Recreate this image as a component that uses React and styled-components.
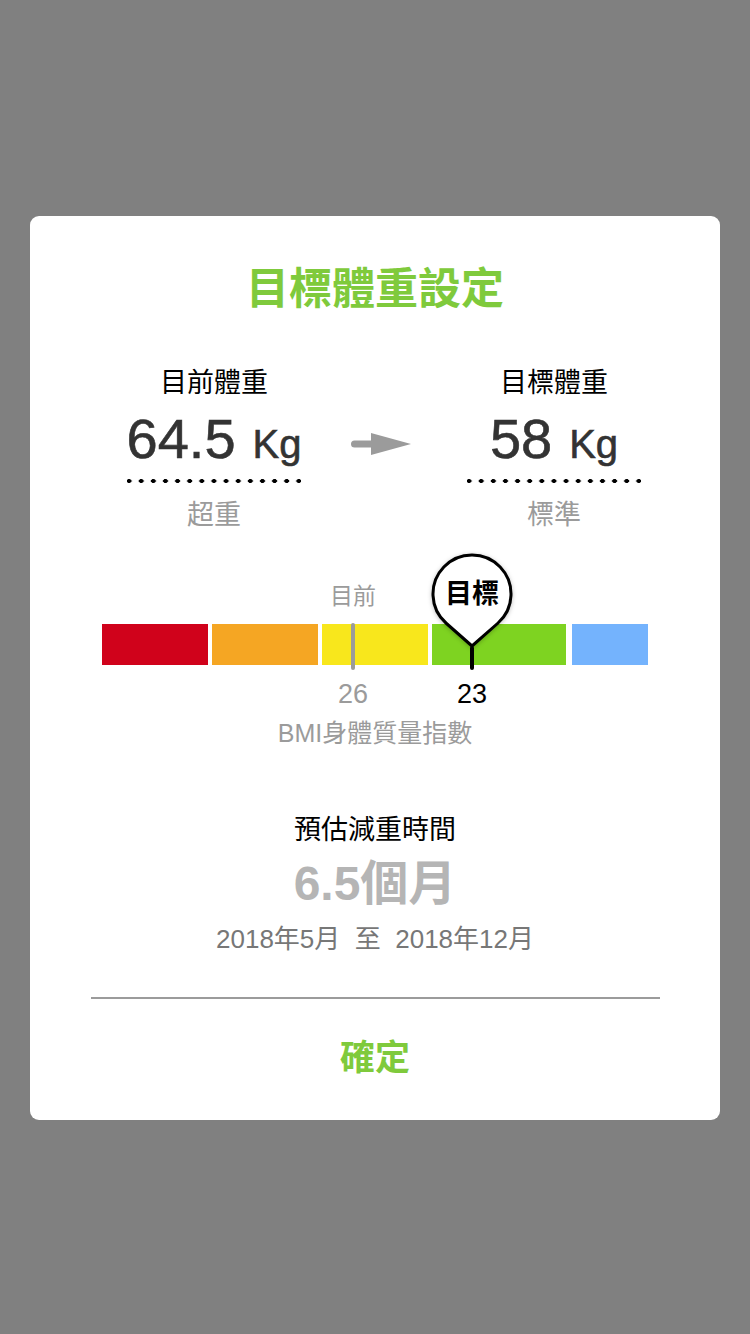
import React from 'react';
import styled, { createGlobalStyle } from 'styled-components';

const GlobalStyle = createGlobalStyle`
  html, body {
    margin: 0;
    padding: 0;
    background: #808080;
  }
  body {
    width: 750px;
    min-height: 1334px;
    font-family: "Liberation Sans", "Noto Sans CJK TC", sans-serif;
  }
`;

const GREEN = '#7fca3c';

const Page = styled.div`
  width: 750px;
  height: 1334px;
  padding-top: 216px;
  box-sizing: border-box;
`;

const Card = styled.div`
  width: 690px;
  margin-left: 30px;
  background: #fff;
  border-radius: 9px;
  padding: 43px 0 32px;
  box-sizing: border-box;
  display: flex;
  flex-direction: column;
  align-items: center;
`;

const Title = styled.h1`
  margin: 0;
  font-size: 43px;
  line-height: 60px;
  font-weight: 700;
  color: ${GREEN};
`;

const WeightRow = styled.div`
  align-self: stretch;
  display: flex;
  padding-left: 97px;
  margin-top: 47px;
`;

const WeightCol = styled.div`
  width: 174px;
  display: flex;
  flex-direction: column;
  align-items: center;
`;

const Label = styled.div`
  font-size: 27px;
  line-height: 34px;
  color: #000;
`;

const Number = styled.div`
  margin-top: 9px;
  height: 60px;
  display: flex;
  align-items: baseline;
  white-space: nowrap;
  color: #333;
  font-size: 56px;
  line-height: 60px;
  -webkit-text-stroke: 0.6px #333;
`;

const Unit = styled.span`
  font-size: 40px;
  margin-left: 17px;
`;

const Dots = styled.div`
  margin-top: 10px;
  width: 174px;
  height: 4px;
  background-image: radial-gradient(ellipse 3px 2px at center, #000 80%, transparent 100%);
  background-size: 12.14px 4px;
  background-position: -4px 0;
`;

const Status = styled.div`
  margin-top: 15px;
  font-size: 27px;
  line-height: 34px;
  color: #9b9b9b;
`;

const ArrowCol = styled.div`
  width: 62px;
  margin: 0 55px 0 49px;
  padding-top: 66px;
`;

const Scale = styled.div`
  position: relative;
  width: 546px;
  margin-top: 92px;
`;

const Bar = styled.div`
  display: flex;
  height: 41px;
`;

const Segment = styled.div`
  width: ${p => p.$w}px;
  margin-right: ${p => p.$gap || 0}px;
  background: ${p => p.$color};
`;

const TickArea = styled.div`
  height: 34px;
  margin-top: 11px;
`;

const Marker = styled.div`
  position: absolute;
  left: ${p => p.$x - 2}px;
  top: ${p => p.$top}px;
  width: 4px;
  height: ${p => p.$h}px;
  border-radius: 2px;
  background: ${p => p.$color};
`;

const Tick = styled.div`
  position: absolute;
  left: ${p => p.$x}px;
  top: 53px;
  transform: translateX(-50%);
  font-size: 27px;
  line-height: 34px;
  color: ${p => p.$color};
`;

const CurrentLabel = styled.div`
  position: absolute;
  left: ${p => p.$x}px;
  top: -43px;
  transform: translateX(-50%);
  font-size: 23px;
  line-height: 30px;
  color: #9b9b9b;
  white-space: nowrap;
`;

const Pin = styled.div`
  position: absolute;
  left: ${p => p.$x - 42}px;
  top: -72px;
  width: 84px;
  height: 96px;

  svg {
    display: block;
    filter: drop-shadow(0 1px 2px rgba(0, 0, 0, 0.25));
  }
`;

const PinText = styled.div`
  position: absolute;
  left: 0;
  right: 0;
  top: 25px;
  text-align: center;
  font-size: 27px;
  line-height: 34px;
  font-weight: 700;
  color: #000;
`;

const BmiCaption = styled.div`
  margin-top: 7px;
  font-size: 25px;
  line-height: 32px;
  color: #9b9b9b;
`;

const EstimateLabel = styled.div`
  margin-top: 63px;
  font-size: 27px;
  line-height: 36px;
  color: #000;
`;

const EstimateValue = styled.div`
  margin-top: 6px;
  font-size: 48px;
  line-height: 60px;
  font-weight: 700;
  color: #b5b5b5;
`;

const DateRange = styled.div`
  margin-top: 8px;
  font-size: 26px;
  line-height: 34px;
  color: #777;
  white-space: pre;
`;

const Divider = styled.div`
  margin-top: 41px;
  width: 569px;
  height: 2px;
  background: #9b9b9b;
`;

const ConfirmButton = styled.button`
  margin-top: 29px;
  border: none;
  background: none;
  padding: 0;
  font-family: inherit;
  font-size: 35px;
  line-height: 60px;
  font-weight: 700;
  color: ${GREEN};
  cursor: pointer;
`;

const segments = [
  { w: 106, gap: 4, color: '#d0021b' },
  { w: 106, gap: 4, color: '#f5a623' },
  { w: 106, gap: 4, color: '#f8e71c' },
  { w: 134, gap: 6, color: '#7ed321' },
  { w: 76, gap: 0, color: '#74b3fd' },
];

const CURRENT_X = 251;
const TARGET_X = 370;

function Arrow() {
  return (
    <svg width="62" height="24" viewBox="0 0 62 24">
      <line x1="4.5" y1="12" x2="24" y2="12" stroke="#9b9b9b" strokeWidth="7" strokeLinecap="round" />
      <polygon points="21,1 61,12 21,23" fill="#9b9b9b" />
    </svg>
  );
}

function PinShape() {
  return (
    <svg width="84" height="96" viewBox="-42 -42 84 96">
      <path
        d="M0 52 L-25.8 29.25 A39 39 0 1 1 25.8 29.25 Z"
        fill="#fff"
        stroke="#000"
        strokeWidth="3"
        strokeLinejoin="round"
      />
    </svg>
  );
}

function Weight({ label, value, status }) {
  return (
    <WeightCol>
      <Label>{label}</Label>
      <Number>
        {value}
        <Unit>Kg</Unit>
      </Number>
      <Dots />
      <Status>{status}</Status>
    </WeightCol>
  );
}

export default function App() {
  return (
    <Page>
      <GlobalStyle />
      <Card>
        <Title>目標體重設定</Title>
        <WeightRow>
          <Weight label="目前體重" value="64.5" status="超重" />
          <ArrowCol>
            <Arrow />
          </ArrowCol>
          <Weight label="目標體重" value="58" status="標準" />
        </WeightRow>

        <Scale>
          <Bar>
            {segments.map((s, i) => (
              <Segment key={i} $w={s.w} $gap={s.gap} $color={s.color} />
            ))}
          </Bar>
          <TickArea />
          <CurrentLabel $x={CURRENT_X}>目前</CurrentLabel>
          <Marker $x={CURRENT_X} $top={-1} $h={47} $color="#9b9b9b" />
          <Tick $x={CURRENT_X} $color="#9b9b9b">26</Tick>
          <Marker $x={TARGET_X} $top={22} $h={24} $color="#000" />
          <Pin $x={TARGET_X}>
            <PinShape />
            <PinText>目標</PinText>
          </Pin>
          <Tick $x={TARGET_X} $color="#000">23</Tick>
        </Scale>

        <BmiCaption>BMI身體質量指數</BmiCaption>
        <EstimateLabel>預估減重時間</EstimateLabel>
        <EstimateValue>6.5個月</EstimateValue>
        <DateRange>2018年5月  至  2018年12月</DateRange>
        <Divider />
        <ConfirmButton>確定</ConfirmButton>
      </Card>
    </Page>
  );
}
